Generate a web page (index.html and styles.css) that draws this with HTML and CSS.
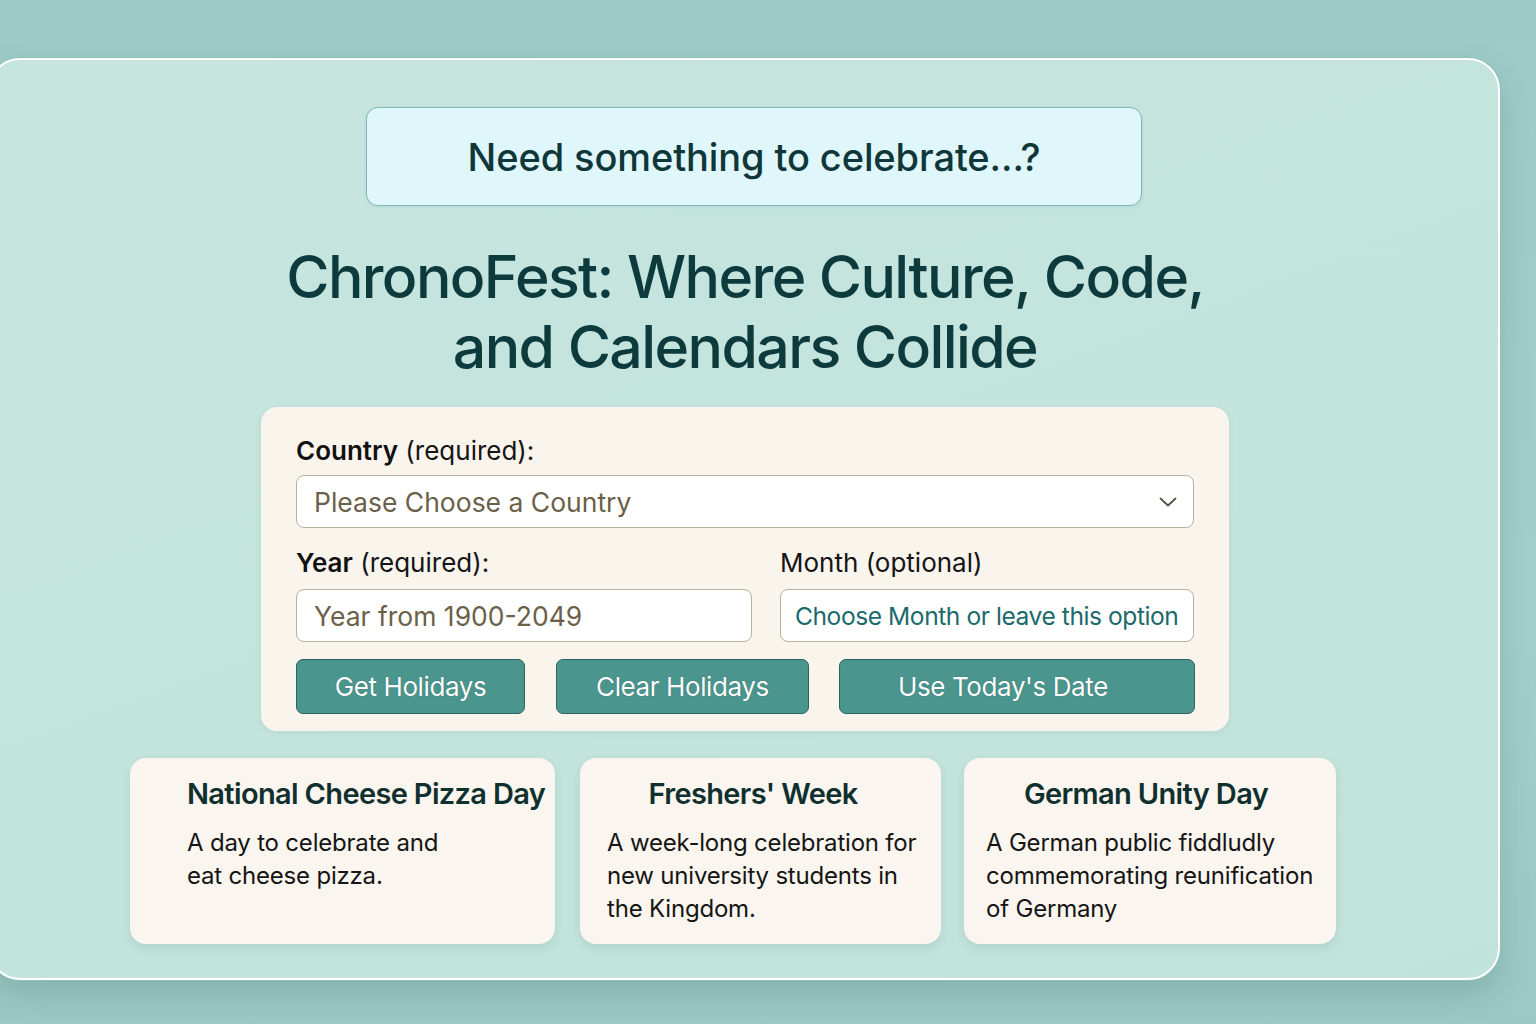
FILE: index.html
```html
<!DOCTYPE html>
<html lang="en">
<head>
<meta charset="utf-8">
<title>ChronoFest</title>
<link rel="stylesheet" href="styles.css">
</head>
<body>
<main class="panel">
  <div class="banner">Need something to celebrate...?</div>
  <h1 class="title">ChronoFest: Where Culture, Code,<br>and Calendars Collide</h1>
  <form class="form">
    <label class="label" for="country"><b>Country</b> (required):</label>
    <div class="select-wrap">
      <select id="country" class="field select">
        <option>Please Choose a Country</option>
      </select>
      <svg class="chevron" width="18" height="12" viewBox="0 0 18 12"><path d="M1.5 2.5 L9 9.5 L16.5 2.5" fill="none" stroke="#5a5040" stroke-width="1.8" stroke-linecap="round" stroke-linejoin="round"/></svg>
    </div>
    <div class="row">
      <div class="col">
        <label class="label" for="year"><b>Year</b> (required):</label>
        <input id="year" class="field" type="text" placeholder="Year from 1900-2049">
      </div>
      <div class="col">
        <label class="label" for="month">Month (optional)</label>
        <select id="month" class="field month">
          <option>Choose Month or leave this option</option>
        </select>
      </div>
    </div>
    <div class="buttons">
      <button type="button" class="btn btn-get">Get Holidays</button>
      <button type="button" class="btn btn-clear">Clear Holidays</button>
      <button type="button" class="btn btn-today">Use Today's Date</button>
    </div>
  </form>
  <section class="cards">
    <article class="card card-1">
      <h2 class="card-title">National Cheese Pizza Day</h2>
      <p class="card-text">A day to celebrate and<br>eat cheese pizza.</p>
    </article>
    <article class="card card-2">
      <h2 class="card-title">Freshers' Week</h2>
      <p class="card-text">A week-long celebration for new university students in the Kingdom.</p>
    </article>
    <article class="card card-3">
      <h2 class="card-title">German Unity Day</h2>
      <p class="card-text">A German public fiddludly commemorating reunification of Germany</p>
    </article>
  </section>
</main>
</body>
</html>
```
FILE: styles.css
```css
* { box-sizing: border-box; }
html, body { margin: 0; padding: 0; }
body {
  width: 1536px;
  height: 1024px;
  overflow: hidden;
  background: linear-gradient(180deg, #9dcac6 0%, #a3cfca 60%, #9cc8c3 100%);
  font-family: Inter, "Noto Sans", "Liberation Sans", sans-serif;
  padding-top: 58px;
}
.panel {
  margin-left: -12px;
  width: 1512px;
  height: 922px;
  border: 2px solid #ffffff;
  border-radius: 32px;
  background: linear-gradient(160deg, #c5e5de 0%, #c2e3dc 100%);
  box-shadow: 0 0 0 1px #8fc0bb, 0 14px 30px rgba(40, 100, 95, 0.22);
  padding-top: 47px;
  display: flex;
  flex-direction: column;
  align-items: flex-start;
}
.panel > * { flex-shrink: 0; }
.banner {
  margin-left: 376px;
  width: 776px;
  height: 99px;
  background: #dff6fa;
  border: 1px solid #7db7b6;
  border-radius: 12px;
  display: flex;
  align-items: center;
  justify-content: center;
  font-size: 38px;
  font-weight: 500;
  color: #0f373a;
  letter-spacing: -0.1px;
  box-shadow: 0 1px 3px rgba(60, 110, 110, 0.12);
}
.title {
  margin: 36px 0 0 271px;
  width: 968px;
  text-align: center;
  font-size: 59px;
  font-weight: 500;
  line-height: 70px;
  color: #0d3a3c;
  letter-spacing: -1.6px;
  white-space: nowrap;
}
.form {
  margin: 25px 0 0 271px;
  width: 968px;
  height: 324px;
  background: #f9f4ec;
  border-radius: 16px;
  padding: 28px 35px 16px;
  box-shadow: 0 2px 6px rgba(60, 100, 90, 0.08);
}
.label {
  display: block;
  font-size: 26px;
  line-height: 32px;
  color: #151515;
}
.label b { font-weight: 600; color: #111; }
.select-wrap {
  position: relative;
  margin-top: 8px;
}
.field {
  display: block;
  width: 100%;
  height: 53px;
  background: #ffffff;
  border: 1px solid #b9b19f;
  border-radius: 8px;
  font-family: Inter, "Noto Sans", "Liberation Sans", sans-serif;
  font-size: 26.5px;
  color: #6b6048;
  padding: 0 17px;
  outline: none;
  appearance: none;
  -webkit-appearance: none;
}
.field::placeholder { color: #6b6048; opacity: 1; }
.select { padding-right: 50px; }
.chevron {
  position: absolute;
  right: 17px;
  top: 21px;
}
.row {
  margin-top: 19px;
  display: grid;
  grid-template-columns: 456px 414px;
  column-gap: 28px;
}
.col .label { margin-bottom: 10px; }
.month {
  color: #1b6a6b;
  padding: 0 2px 0 14px;
  font-size: 24.6px;
  letter-spacing: -0.45px;
}
.buttons {
  margin-top: 17px;
  display: grid;
  grid-template-columns: 229px 253px 355px;
  column-gap: 31px;
}
.btn-today { margin-left: -1px; padding-right: 28px !important; }
.btn {
  height: 55px;
  background: #4b958f;
  border: 1px solid #2d625e;
  border-radius: 7px;
  color: #ffffff;
  font-family: Inter, "Noto Sans", "Liberation Sans", sans-serif;
  font-size: 26px;
  letter-spacing: -0.4px;
  text-shadow: 0 0 1px rgba(20, 60, 58, 0.6);
  cursor: pointer;
  padding: 0;
}
.cards {
  margin: 27px 0 0 140px;
  display: flex;
  gap: 25px;
}
.card {
  height: 186px;
  background: #faf5ee;
  border-radius: 16px;
  padding-top: 18px;
  box-shadow: 0 4px 10px rgba(50, 100, 95, 0.12);
}
.card-title {
  margin: 0;
  font-size: 29px;
  line-height: 36px;
  font-weight: 600;
  color: #10302f;
  letter-spacing: -0.65px;
  white-space: nowrap;
}
.card-text {
  margin: 14px 0 0;
  font-size: 24px;
  line-height: 33px;
  color: #151515;
  letter-spacing: -0.2px;
}
.card-1 { width: 425px; padding-left: 57px; padding-right: 8px; }
.card-2 { width: 361px; padding-left: 27px; padding-right: 24px; }
.card-2 .card-title { text-align: center; margin-right: 18px; }
.card-3 { width: 372px; padding-left: 22px; padding-right: 20px; margin-left: -2px; }
.card-3 .card-title { text-align: center; margin-right: 10px; }
```
